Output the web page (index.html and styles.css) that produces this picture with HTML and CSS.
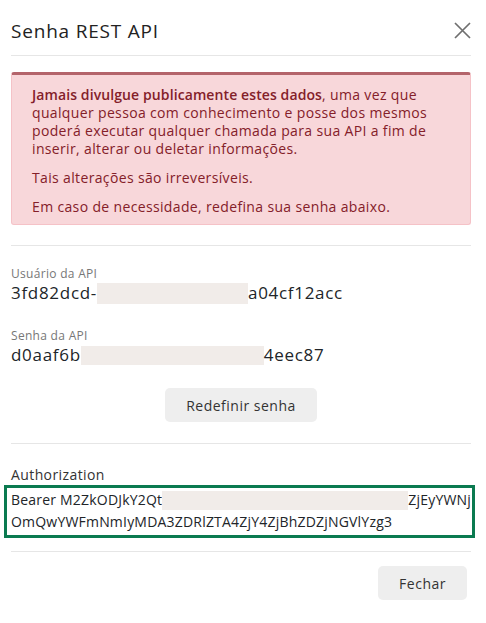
FILE: index.html
```html
<!DOCTYPE html>
<html lang="pt-BR">
<head>
<meta charset="utf-8">
<title>Senha REST API</title>
<link rel="stylesheet" href="styles.css">
</head>
<body>
<div class="modal">
  <header class="modal-header">
    <h1 class="modal-title">Senha REST API</h1>
    <button class="close" aria-label="Fechar">
      <svg width="17" height="17" viewBox="0 0 17 17"><path d="M1 1L16 16M16 1L1 16" stroke="#6f6f6f" stroke-width="1.7" fill="none"/></svg>
    </button>
  </header>
  <div class="modal-body">
    <div class="alert">
      <p><strong>Jamais divulgue publicamente estes dados</strong>, uma vez que qualquer pessoa com conhecimento e posse dos mesmos poderá executar qualquer chamada para sua API a fim de inserir, alterar ou deletar informações.</p>
      <p>Tais alterações são irreversíveis.</p>
      <p>Em caso de necessidade, redefina sua senha abaixo.</p>
    </div>
    <hr class="sep sep-a">
    <div class="field">
      <div class="label">Usuário da API</div>
      <div class="value">3fd82dcd-<span class="redact r1"></span>a04cf12acc</div>
    </div>
    <div class="field field-2">
      <div class="label">Senha da API</div>
      <div class="value">d0aaf6b<span class="redact r2"></span>4eec87</div>
    </div>
    <div class="center">
      <button class="btn">Redefinir senha</button>
    </div>
    <hr class="sep sep-b">
    <div class="auth-label">Authorization</div>
    <div class="auth-box">
      <div class="auth-line">Bearer M2ZkODJkY2Qt<span class="redact r3"></span>ZjEyYWNj</div>
      <div class="auth-line">OmQwYWFmNmIyMDA3ZDRlZTA4ZjY4ZjBhZDZjNGVlYzg3</div>
    </div>
  </div>
  <footer class="modal-footer">
    <button class="btn btn-close">Fechar</button>
  </footer>
</div>
</body>
</html>
```
FILE: styles.css
```css
* { box-sizing: border-box; }
html, body { margin: 0; padding: 0; background: #fff; }
body {
  font-family: "Open Sans", "DejaVu Sans", sans-serif;
  color: #212529;
  font-size: 14px;
}
.modal { padding: 0 15px 0 11px; }
.modal-header {
  height: 56px;
  display: flex;
  align-items: center;
  justify-content: space-between;
  border-bottom: 1px solid #e6e6e6;
  padding-top: 6px;
}
.modal-title {
  margin: 0;
  font-size: 19px;
  font-weight: 400;
  letter-spacing: 0.8px;
  color: #222;
}
.close {
  border: 0;
  background: none;
  padding: 0;
  width: 17px;
  height: 17px;
  display: flex;
}
.modal-body { padding-top: 16px; }
.alert {
  background: #f8d7da;
  border: 1px solid #f5c2c7;
  border-top: 3px solid #b4646b;
  border-radius: 3px;
  color: #842029;
  padding: 11px 20px 8px 20px;
  line-height: 18px;
  letter-spacing: 0.35px;
}
.alert p { margin: 0 0 11px; }
.alert p:last-child { margin-bottom: 0; }
.alert strong { font-weight: 600; letter-spacing: 0.1px; }
.sep { border: 0; border-top: 1px solid #e6e6e6; margin: 0; }
.sep-a { margin-top: 20px; }
.field { margin-top: 20px; }
.field-2 { margin-top: 24px; }
.label { font-size: 12px; color: #777; line-height: 16px; letter-spacing: 0.3px; }
.value { font-size: 17px; line-height: 22px; display: flex; align-items: center; letter-spacing: 0.7px; }
.redact { display: inline-block; background: #f1ece9; height: 21px; flex: none; }
.r1 { width: 151px; }
.r2 { width: 183px; height: 19px; }
.r3 { width: 246px; height: 19px; }
.center { display: flex; justify-content: center; margin-top: 22px; }
.btn {
  font-family: inherit;
  font-size: 14px;
  letter-spacing: 0.5px;
  color: #333;
  background: #eeeeee;
  border: 0;
  border-radius: 5px;
  height: 34px;
  padding: 0 21px;
}
.sep-b { margin-top: 21px; }
.auth-label { margin-top: 22px; font-size: 14px; line-height: 18px; color: #333; letter-spacing: 0.4px; }
.auth-box {
  margin: 1px -4px 0 -7px;
  border: 3px solid #0b7a50;
  padding: 1px 4px 2px 4px;
}
.auth-line { font-size: 14px; line-height: 22px; display: flex; align-items: center; white-space: nowrap; letter-spacing: 0.2px; }
.modal-footer {
  margin-top: 13px;
  border-top: 1px solid #e6e6e6;
  padding-top: 14px;
  display: flex;
  justify-content: flex-end;
  padding-right: 4px;
}
.btn-close { padding: 0 21px; }
```
